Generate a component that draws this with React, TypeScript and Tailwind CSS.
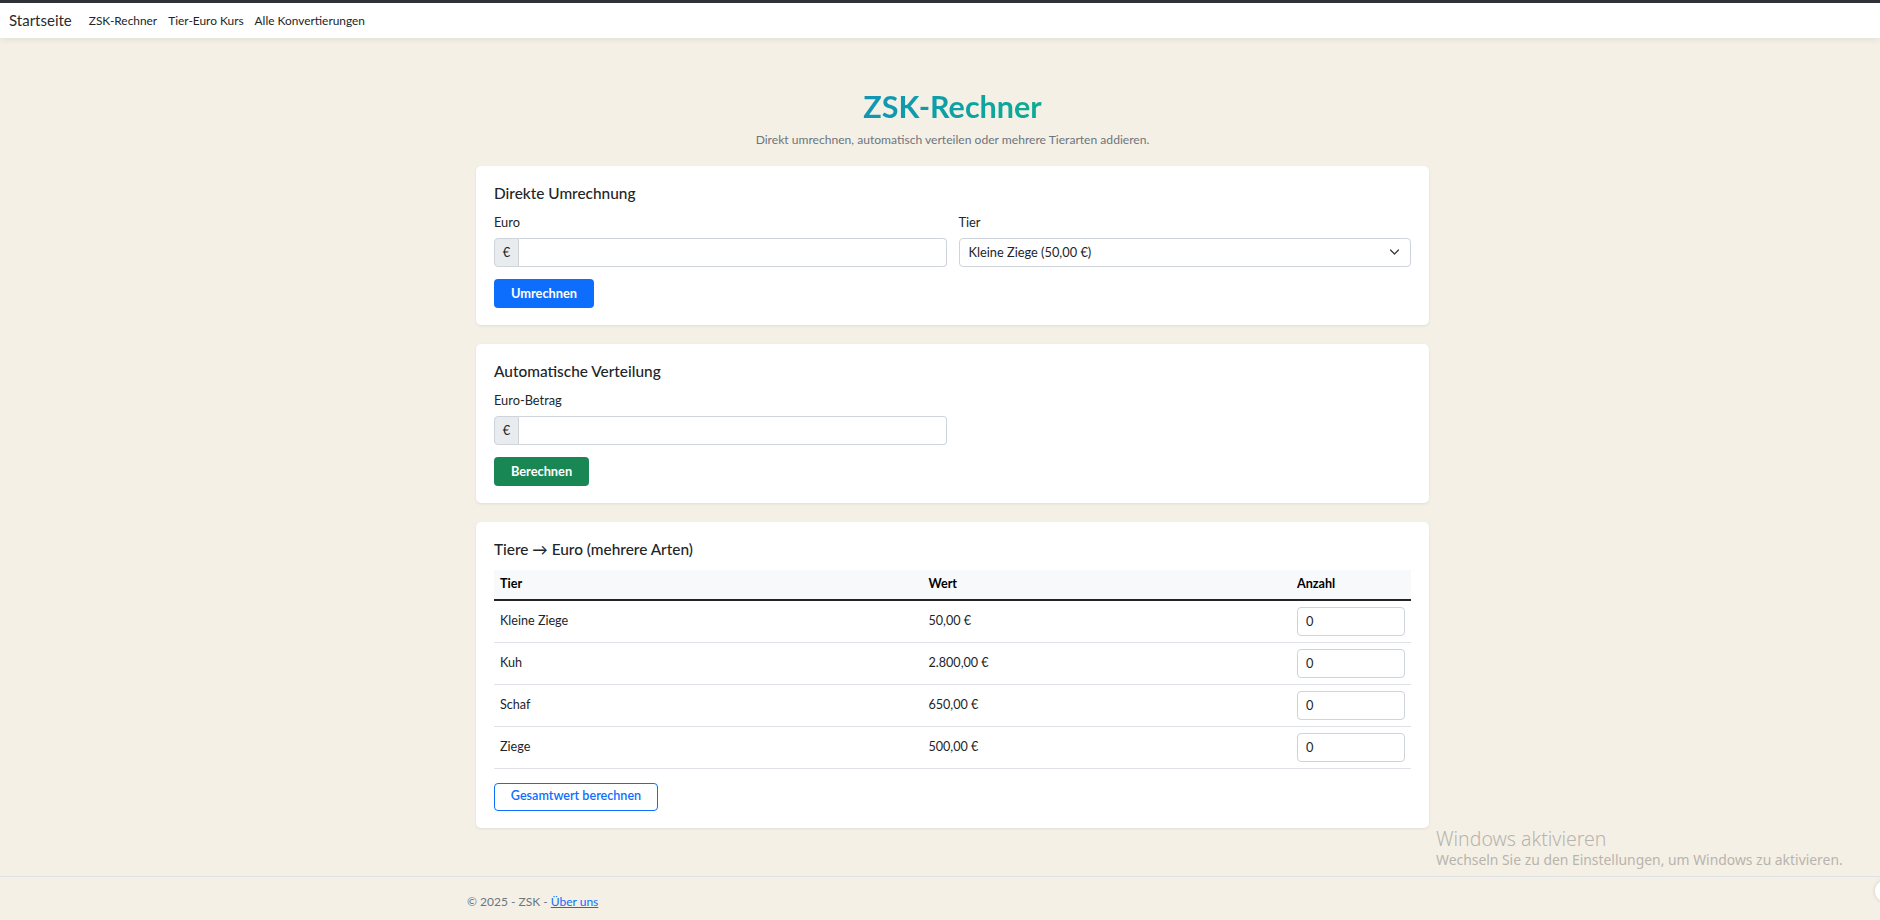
import React from "react";

const rows = [
  { name: "Kleine Ziege", value: "50,00 €" },
  { name: "Kuh", value: "2.800,00 €" },
  { name: "Schaf", value: "650,00 €" },
  { name: "Ziege", value: "500,00 €" },
];

function EuroInput() {
  return (
    <div className="flex h-[29px] w-full">
      <span className="flex w-[25px] items-center justify-center rounded-l-[4px] border border-[#ced4da] bg-[#e9ecef] text-[12.8px] text-[#212529]">
        €
      </span>
      <input
        type="text"
        className="h-full flex-1 rounded-r-[4px] border border-l-0 border-[#ced4da] bg-white px-[9px] text-[12.8px] text-[#212529] outline-none"
      />
    </div>
  );
}

function Card({ title, children, titleMb = "mb-[10px]" }: { title: string; children: React.ReactNode; titleMb?: string }) {
  return (
    <div className="rounded-[5px] bg-white px-[18px] pt-[18px] pb-[17px] shadow-[0_1px_3px_rgba(0,0,0,0.08)]">
      <h5 className={`${titleMb} text-[15.4px] leading-[19px] font-medium text-[#212529]`}>{title}</h5>
      {children}
    </div>
  );
}

export default function App() {
  return (
    <div className="relative flex min-h-screen flex-col bg-[#f4f0e6] [font-family:Lato,'Noto_Sans',sans-serif] text-[#212529]">
      <div className="h-[3px] bg-[#2f3236]" />
      <nav className="relative z-10 flex h-[35px] items-center bg-white px-[9px] shadow-[0_2px_6px_rgba(0,0,0,0.07)]">
        <span className="mr-[17px] text-[15px] text-[#2b2b2b]">Startseite</span>
        <div className="flex gap-[11px] text-[11.9px] text-[#212529]">
          <span>ZSK-Rechner</span>
          <span>Tier-Euro Kurs</span>
          <span>Alle Konvertierungen</span>
        </div>
      </nav>

      <main className="ml-[476px] w-[953px] pt-[51px] pb-[48px]">
        <div className="flex flex-col items-center">
          <h1 className="bg-linear-to-r from-[#1395b4] to-[#0eab93] bg-clip-text text-[30.5px] leading-[35px] font-bold text-transparent">
            ZSK-Rechner
          </h1>
          <p className="mt-[7px] text-[12.1px] leading-[17px] text-[#6c757d]">
            Direkt umrechnen, automatisch verteilen oder mehrere Tierarten addieren.
          </p>
        </div>

        <div className="mt-[18px] flex flex-col gap-[19px]">
          <Card title="Direkte Umrechnung">
            <div className="grid grid-cols-2 gap-[12px]">
              <div>
                <label className="mb-[6px] block text-[12.8px] leading-[19px]">Euro</label>
                <EuroInput />
              </div>
              <div>
                <label className="mb-[6px] block text-[12.8px] leading-[19px]">Tier</label>
                <div className="relative h-[29px]">
                  <select className="h-full w-full appearance-none rounded-[4px] border border-[#ced4da] bg-white pl-[9px] text-[12.8px] text-[#212529] outline-none">
                    <option>Kleine Ziege (50,00 €)</option>
                    <option>Kuh (2.800,00 €)</option>
                    <option>Schaf (650,00 €)</option>
                    <option>Ziege (500,00 €)</option>
                  </select>
                  <svg
                    className="pointer-events-none absolute top-[10px] right-[11px]"
                    width="11"
                    height="8"
                    viewBox="0 0 16 12"
                    fill="none"
                  >
                    <path d="m2 3 6 6 6-6" stroke="#343a40" strokeWidth="1.8" strokeLinecap="round" strokeLinejoin="round" />
                  </svg>
                </div>
              </div>
            </div>
            <button className="mt-[12px] h-[29px] w-[100px] rounded-[4px] bg-[#0d6efd] text-[12.8px] font-bold text-white">
              Umrechnen
            </button>
          </Card>

          <Card title="Automatische Verteilung">
            <div className="w-[453px]">
              <label className="mb-[6px] block text-[12.8px] leading-[19px]">Euro-Betrag</label>
              <EuroInput />
            </div>
            <button className="mt-[12px] h-[29px] w-[95px] rounded-[4px] bg-[#198754] text-[12.8px] font-bold text-white">
              Berechnen
            </button>
          </Card>

          <Card title="Tiere → Euro (mehrere Arten)" titleMb="mb-[11px]">
            <table className="w-full border-collapse text-[12.6px]">
              <thead>
                <tr className="h-[30px] border-b-2 border-[#212529] bg-[#f8f9fa] text-left">
                  <th className="w-[429px] px-[6px] font-bold text-black">Tier</th>
                  <th className="w-[369px] px-[6px] font-bold text-black">Wert</th>
                  <th className="px-[6px] font-bold text-black">Anzahl</th>
                </tr>
              </thead>
              <tbody>
                {rows.map((r) => (
                  <tr key={r.name} className="h-[42px] border-b border-[#dee2e6]">
                    <td className="px-[6px] pt-[1px]">{r.name}</td>
                    <td className="px-[6px] pt-[1px]">{r.value}</td>
                    <td className="px-[6px]">
                      <input
                        type="number"
                        defaultValue={0}
                        className="h-[29px] w-[108px] rounded-[4px] border border-[#ced4da] bg-white px-[8px] text-[12.8px] text-[#212529] outline-none"
                      />
                    </td>
                  </tr>
                ))}
              </tbody>
            </table>
            <button className="mt-[14px] h-[28px] w-[164px] rounded-[4px] border border-[#0d6efd] bg-white text-[12.6px] font-semibold text-[#0d6efd]">
              Gesamtwert berechnen
            </button>
          </Card>
        </div>
      </main>

      <footer className="flex-1 border-t border-[#dee2e6]">
        <div className="ml-[467px] pt-[15px] text-[12px] leading-[19px] text-[#6c757d]">
          © 2025 - ZSK - <a className="text-[#0d6efd] underline">Über uns</a>
        </div>
      </footer>

      <div className="pointer-events-none absolute top-[826px] left-[1436px] text-[#b8b4ad] [font-family:'Noto_Sans',sans-serif]">
        <div className="text-[19.5px] leading-[25px] font-light">Windows aktivieren</div>
        <div className="text-[13.9px] leading-[18px]">Wechseln Sie zu den Einstellungen, um Windows zu aktivieren.</div>
      </div>
      <div className="absolute top-[880px] left-[1875px] h-[22px] w-[22px] rounded-full bg-white shadow-[0_0_4px_rgba(0,0,0,0.15)]" />
    </div>
  );
}
